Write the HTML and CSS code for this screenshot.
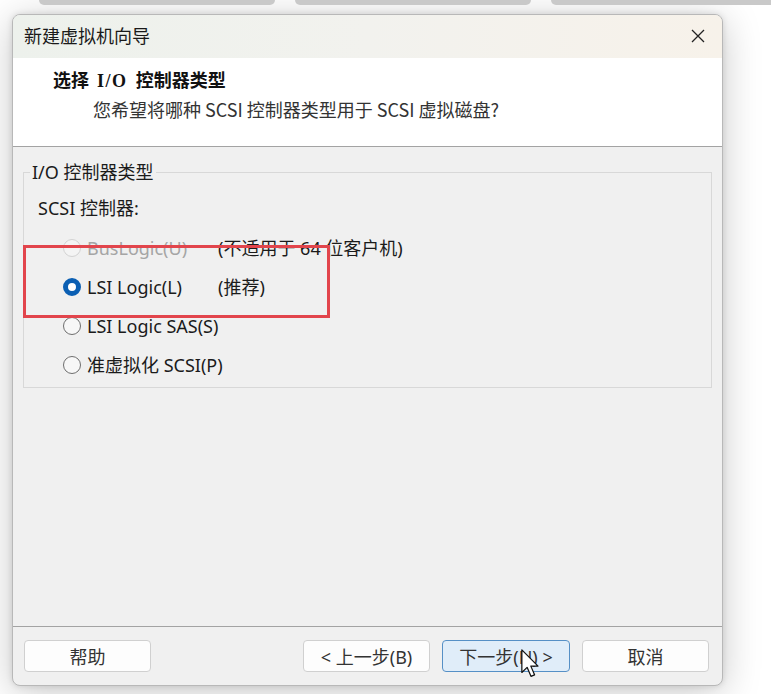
FILE: index.html
```html
<!DOCTYPE html>
<html lang="zh-CN">
<head>
<meta charset="utf-8">
<title>新建虚拟机向导</title>
<link rel="stylesheet" href="styles.css">
</head>
<body>
<div class="tabs"><span class="tab"></span><span class="tab"></span><span class="tab last"></span></div>
<div class="dialog">
  <div class="titlebar">
    <span class="title">新建虚拟机向导</span>
    <svg class="close" width="14" height="14" viewBox="0 0 14 14"><path d="M1 1 L13 13 M13 1 L1 13" stroke="#222" stroke-width="1.3" fill="none"/></svg>
  </div>
  <div class="header">
    <div class="h-title">选择 <span class="serif">I/O</span> 控制器类型</div>
    <div class="h-sub">您希望将哪种 SCSI 控制器类型用于 SCSI 虚拟磁盘?</div>
  </div>
  <div class="body">
    <fieldset class="group">
      <legend>I/O 控制器类型</legend>
      <div class="sublabel">SCSI 控制器:</div>
      <div class="options">
        <div class="opt disabled"><span class="radio"></span><span class="lbl">BusLogic(U)</span><span class="note">(不适用于 64 位客户机)</span></div>
        <div class="opt"><span class="radio on"></span><span class="lbl">LSI Logic(L)</span><span class="note">(推荐)</span></div>
        <div class="opt"><span class="radio"></span><span class="lbl">LSI Logic SAS(S)</span></div>
        <div class="opt"><span class="radio"></span><span class="lbl">准虚拟化 SCSI(P)</span></div>
        <div class="mark"></div>
      </div>
    </fieldset>
  </div>
  <div class="footer">
    <button class="btn">帮助</button>
    <div class="navs">
      <button class="btn">&lt; 上一步(B)</button>
      <button class="btn primary wide">下一步(N) &gt;</button>
      <button class="btn">取消</button>
    </div>
  </div>
</div>
<svg class="cursor" width="18" height="29" viewBox="0 0 13 21"><path d="M0.6 0.6 V17 L4.4 13.3 L7.2 19.8 L9.8 18.7 L7.1 12.4 H12.3 Z" fill="#fff" stroke="#111" stroke-width="0.9" stroke-linejoin="round"/></svg>
</body>
</html>
```

FILE: styles.css
```css
* { box-sizing: border-box; }
html, body { margin: 0; padding: 0; }
body {
  width: 771px;
  height: 694px;
  overflow: hidden;
  position: relative;
  background: #ffffff;
  font-family: "Noto Sans", "Noto Sans CJK SC", sans-serif;
  color: #1b1b1b;
}
.tabs { display: flex; gap: 20px; padding-left: 39px; height: 5px; }
.tab { width: 236px; height: 5px; background: #c9c9c9; border-radius: 0 0 8px 8px; }
.tab.last { flex: 1; border-bottom-right-radius: 0; }

.dialog {
  margin: 9px 0 0 12px;
  width: 711px;
  height: 672px;
  border: 1px solid #b8b8b8;
  border-radius: 8px;
  overflow: hidden;
  display: flex;
  flex-direction: column;
  background: #f0f0f0;
  box-shadow: 0 6px 38px rgba(0,0,0,.22), 0 0 6px rgba(0,0,0,.12);
}
.titlebar {
  height: 43px;
  flex: none;
  display: flex;
  align-items: center;
  justify-content: space-between;
  padding: 0 17px 4px 11px;
  background: linear-gradient(90deg, #edf1ec 0%, #f2f2ee 50%, #f7f2ea 100%);
  font-family: "Noto Sans CJK SC", sans-serif;
  font-size: 18px;
  line-height: 24px;
  color: #1a1a1a;
}
.close { margin-top: 2px; }
.header {
  height: 89px;
  flex: none;
  background: #fff;
  border-bottom: 1px solid #a3a3a3;
  padding-top: 9px;
  font-size: 18px;
  line-height: 24px;
}
.h-title {
  padding-left: 40px;
  font-family: "Noto Sans CJK SC", sans-serif;
  font-weight: 700;
  color: #111;
}
.serif {
  font-family: "Liberation Serif", serif;
  padding: 0 4px;
  letter-spacing: 1.5px;
}
.h-sub {
  margin-top: 4px;
  padding-left: 80px;
  font-family: "Noto Sans CJK SC", sans-serif;
  color: #333;
}
.body {
  flex: 1;
  padding: 13px 10px 0;
  font-size: 18px;
  line-height: 24px;
}
.group {
  margin: 0;
  min-width: 0;
  border: 1px solid #d8d8d8;
  padding: 12px 14px 2px;
}
.group legend {
  padding: 0 2px;
  margin-left: -8px;
  line-height: 24px;
}
.options { position: relative; margin-top: 8.5px; }
.opt {
  height: 39px;
  display: flex;
  align-items: center;
  padding-left: 25px;
  white-space: nowrap;
}
.radio {
  width: 18px;
  height: 18px;
  flex: none;
  border-radius: 50%;
  border: 1px solid #6e6e6e;
  background: #f7f7f7;
  margin-right: 6px;
}
.radio.on { border: 5px solid #0b5fb3; background: #fff; }
.lbl { width: 131px; flex: none; }
.disabled .radio { border-color: #d2d2d2; background: #f4f4f4; }
.disabled .lbl { color: #a5a5a5; }
.mark {
  position: absolute;
  left: -15px;
  top: 16.5px;
  width: 307px;
  height: 73px;
  border: 3px solid #e2454c;
}
.footer {
  height: 59px;
  flex: none;
  border-top: 1px solid #a3a3a3;
  padding: 13px 13px 0 11px;
  display: flex;
  justify-content: space-between;
  align-items: flex-start;
}
.navs { display: flex; gap: 12px; }
.btn {
  width: 127px;
  height: 32px;
  border: 1px solid #d0d0d0;
  border-radius: 4px;
  background: #fdfdfd;
  font-family: "Noto Sans", "Noto Sans CJK SC", sans-serif;
  font-size: 18px;
  color: #333;
  padding: 0;
  display: flex;
  align-items: center;
  justify-content: center;
}
.btn.wide { width: 128px; }
.btn.primary { background: #e0edf9; border-color: #5690c6; }
.cursor { position: absolute; left: 521px; top: 649px; }
```
